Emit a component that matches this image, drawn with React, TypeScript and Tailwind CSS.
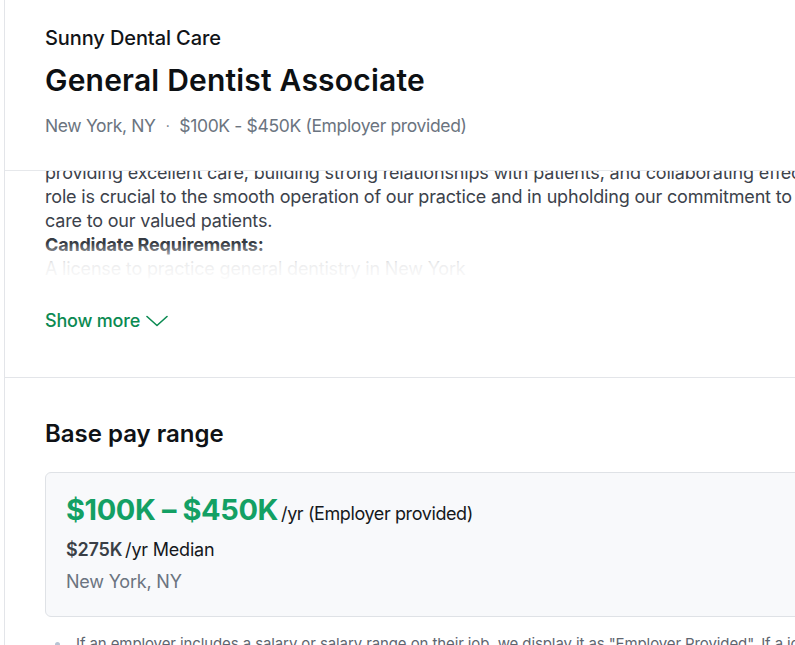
export default function App() {
  return (
    <div className="w-[795px] h-[645px] overflow-hidden bg-white font-['Inter','Liberation_Sans',sans-serif]">
      <div className="ml-[4px] w-[1100px] min-h-full border-l border-[#e3e5e9]">
        {/* Sticky job header */}
        <header className="px-10 pt-6 pb-[30px] border-b border-[#e6e8eb]">
          <div className="text-[20px] leading-7 font-medium text-[#111418] tracking-[-0.1px]">Sunny Dental Care</div>
          <h1 className="mt-2.5 text-[30px] leading-9 font-semibold text-[#0d1013] tracking-[0.2px]">
            General Dentist Associate
          </h1>
          <div className="mt-[14px] flex items-center text-[17.5px] leading-7 text-[#6b7480] tracking-[-0.35px]">
            <span>New York, NY</span>
            <span className="mx-[10px] text-[14px]">·</span>
            <span>$100K - $450K (Employer provided)</span>
          </div>
        </header>

        {/* Description */}
        <section className="px-10 pb-[42px]">
          <div className="relative h-[112px] overflow-hidden">
            <div className="-mt-[10px] text-[18px] leading-6 text-[#3c424b] whitespace-nowrap tracking-[-0.18px]">
              <p>
                providing excellent care, building strong relationships with patients, and collaborating effectively with our team. This
                <br />
                role is crucial to the smooth operation of our practice and in upholding our commitment to providing exceptional
                <br />
                care to our valued patients.
              </p>
              <p className="font-bold text-[#363b43]">Candidate Requirements:</p>
              <p>A license to practice general dentistry in New York</p>
              <p>At least 2 years of experience as a general dentist</p>
            </div>
            <div className="absolute inset-x-0 bottom-0 h-[40px] bg-gradient-to-b from-white/0 via-white/90 to-white" />
          </div>
          <button className="mt-6 flex items-center gap-[6px] text-[18px] leading-7 font-medium text-[#0b8a52] tracking-[-0.2px]">
            Show more
            <svg width="22" height="12" viewBox="0 0 22 12" fill="none" stroke="currentColor" strokeWidth="1.6" strokeLinecap="round" strokeLinejoin="round">
              <polyline points="1,1.5 11,10.5 21,1.5" />
            </svg>
          </button>
        </section>

        {/* Base pay range */}
        <section className="border-t border-[#e3e5e9] px-10 pt-10">
          <h2 className="text-[24px] leading-8 font-semibold text-[#0f1216]">Base pay range</h2>
          <div className="mt-[22px] w-[900px] rounded-md border border-[#dfe2e6] bg-[#f8f9fb] px-5 pt-[19px] pb-5">
            <div className="flex items-baseline">
              <span className="text-[29px] leading-9 font-bold text-[#13a064] tracking-[-0.4px]">$100K – $450K</span>
              <span className="ml-[3px] text-[18px] text-[#15181c] tracking-[-0.4px]">/yr (Employer provided)</span>
            </div>
            <div className="mt-2 text-[18px] leading-7 text-[#15181c] tracking-[-0.2px]">
              <span className="font-semibold text-[#3a3f46]">$275K</span>
              <span className="ml-[3px]">/yr Median</span>
            </div>
            <div className="mt-1 text-[18px] leading-7 text-[#6b7480] tracking-[-0.2px]">New York, NY</div>
          </div>
          <ul className="mt-[15px] pl-[10px] text-[15px] leading-6 text-[#5f6670] whitespace-nowrap tracking-[-0.1px]">
            <li className="flex items-center gap-[16px]">
              <span className="h-[5px] w-[5px] rounded-full bg-[#b7c4d4]" />
              If an employer includes a salary or salary range on their job, we display it as "Employer Provided". If a job does not include salary information
            </li>
          </ul>
        </section>
      </div>
    </div>
  );
}
